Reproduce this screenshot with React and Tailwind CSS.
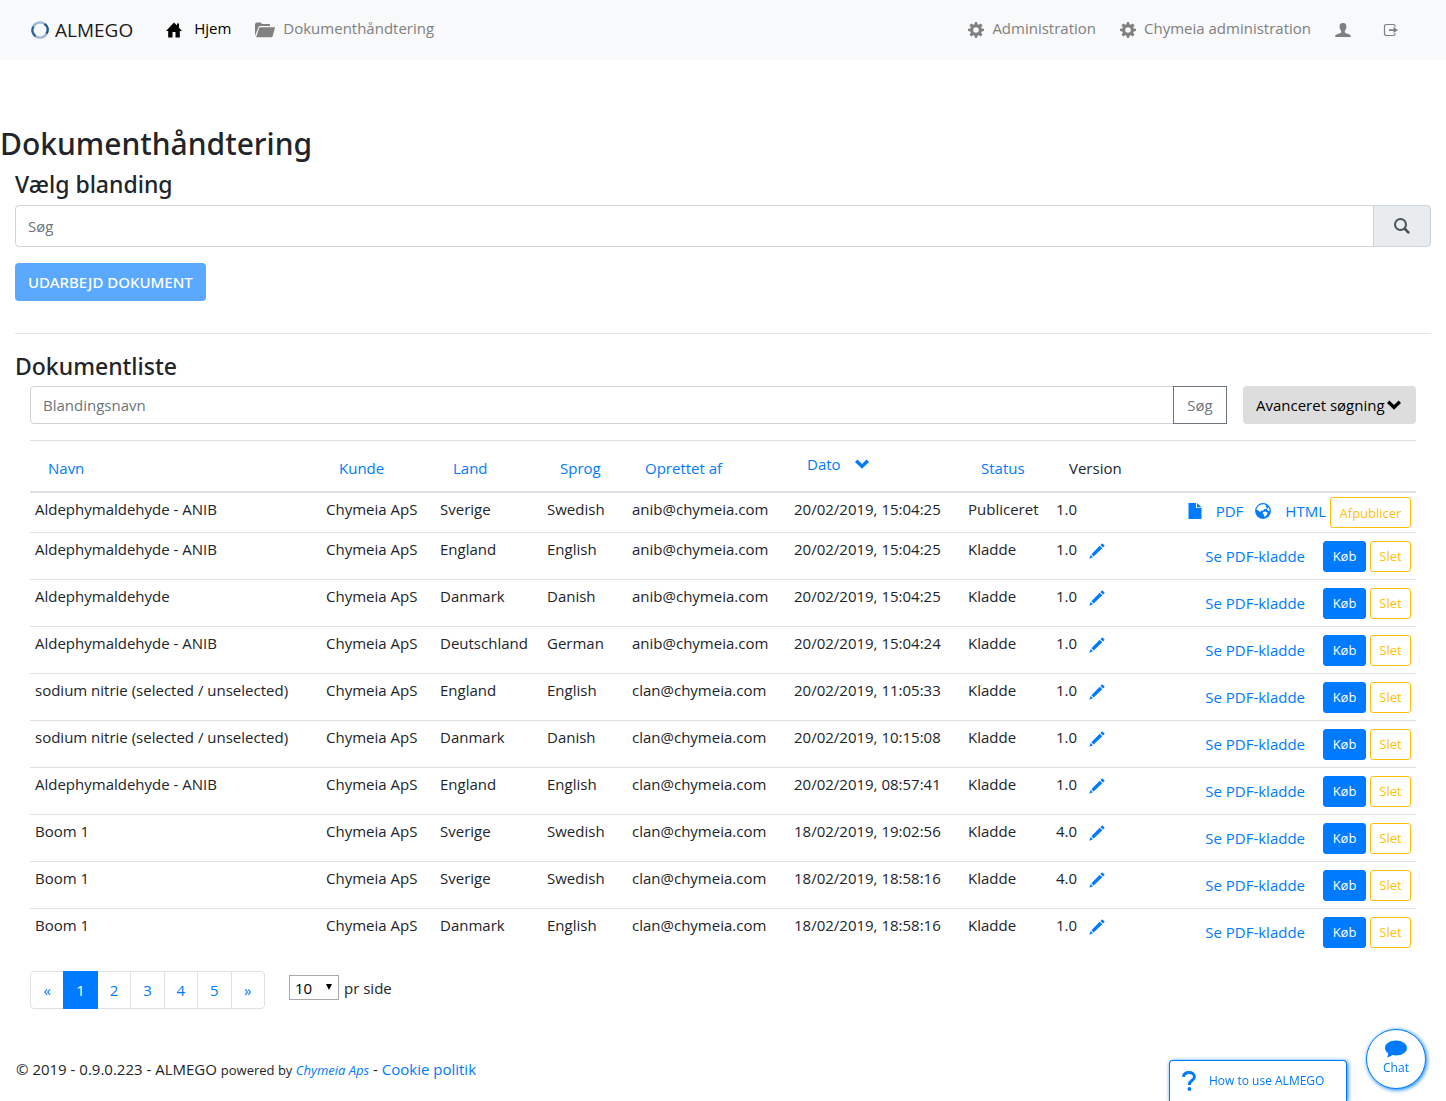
import { useState } from "react";

const HomeIcon = () => (
  <svg viewBox="0 0 16 16" className="w-4 h-4" fill="currentColor" aria-hidden="true">
    <path d="M8 .4 0 8.900h2.200V15.500h4.300V10h3v5.500h4.300V8.900H16L13 5.700V1.500h-2v2.100z" />
  </svg>
);

const FolderIcon = () => (
  <svg viewBox="0 0 20 16" className="w-5 h-4" fill="currentColor" aria-hidden="true">
    <path d="M0 14V2.200Q0 1.900.4 1.600L1.200.700Q1.400.500 1.800.500H5.500Q5.900.500 6.100.800L7 2H14.500Q15 2 15 2.500V4H4.700Q3.900 4 3.600 4.800z" />
    <path d="M5 5.200H19.400Q20.100 5.200 19.900 5.900L17.500 14.600Q17.300 15.300 16.700 15.300H1.800Q1.100 15.300 1.400 14.600L4.200 5.800Q4.400 5.200 5 5.200z" />
  </svg>
);

const CogIcon = () => (
  <svg viewBox="0 0 16 16" className="w-4 h-4" fill="currentColor" aria-hidden="true">
    <path
      fillRule="evenodd"
      d="M6.900 0h2.200l.4 2.200 1.300.5L12.700 1.500l1.800 1.800-1.300 1.900.5 1.300 2.300.4v2.200l-2.300.4-.5 1.300 1.300 1.900-1.800 1.800-1.900-1.300-1.300.5L9.100 16H6.900l-.4-2.300-1.300-.5-1.900 1.300-1.800-1.800 1.300-1.900-.5-1.300L0 9.100V6.900l2.300-.4.5-1.300L1.500 3.300l1.800-1.800 1.900 1.200 1.300-.5zM8 5.200a2.800 2.800 0 1 0 0 5.600 2.800 2.800 0 0 0 0-5.600z"
    />
  </svg>
);

const UserIcon = () => (
  <svg viewBox="0 0 16 16" className="w-4 h-4" fill="currentColor" aria-hidden="true">
    <path d="M8 1C5.400 1 4.400 2.600 4.600 5c.1 1.600.9 2.900 1.600 3.800v1.300c0 .4-.2.700-.6.900L1.500 12.500C.5 12.900.2 13.700.2 14.500V15h15.600v-.5c0-.8-.3-1.600-1.300-2L10.400 11c-.4-.2-.6-.5-.6-.9V8.800c.7-.9 1.500-2.200 1.600-3.800C11.600 2.600 10.600 1 8 1z" />
  </svg>
);

const LogoutIcon = () => (
  <svg viewBox="0 0 16 16" className="w-4 h-4" fill="currentColor" aria-hidden="true">
    <path d="M12 5V4Q12 2.500 10.500 2.500H3.500Q1.500 2.500 1.500 4.500V11.500Q1.500 13.500 3.500 13.500H10.500Q12 13.500 12 12V11" fill="none" stroke="currentColor" strokeWidth="1.200" />
    <path d="M6 7.200h4.500V5l4.500 3-4.500 3V8.900H6z" />
  </svg>
);

const SearchIcon = () => (
  <svg viewBox="0 0 16 16" className="w-4 h-4" fill="none" stroke="currentColor" aria-hidden="true">
    <circle cx="6.500" cy="6.500" r="5.500" strokeWidth="2" />
    <path d="m10.500 10.500 4.600 4.600" strokeWidth="2.600" />
  </svg>
);

const ChevronIcon = () => (
  <svg viewBox="0 0 14 10" className="w-[14px] h-[10px]" fill="currentColor" aria-hidden="true">
    <path d="M2.400.6 7 5 11.600.6 14 3 7 9.800 0 3z" />
  </svg>
);

const PencilIcon = () => (
  <svg viewBox="0 0 16 16" className="w-4 h-4" fill="currentColor" aria-hidden="true">
    <path d="M12.700.7q.5-.5 1 0l1.600 1.600q.5.500 0 1L14 4.600 11.400 2zM10.700 2.700l2.600 2.600-8.600 8.200-2.300-2.300zM1.700 11.900l2.300 2.300L.2 15.800z" />
  </svg>
);

const FileIcon = () => (
  <svg viewBox="0 0 14 16" className="w-[14px] h-4" fill="currentColor" aria-hidden="true">
    <path d="M.5 0H8v5h5.500v11H.5z" />
    <path d="M9 0l4.500 4.200H9z" />
  </svg>
);

const GlobeIcon = () => (
  <svg viewBox="0 0 16 16" className="w-4 h-4" aria-hidden="true">
    <circle cx="8" cy="8" r="7.900" fill="currentColor" />
    <path d="M5.500 1.700 9 1.200l2.200 1.100-.7 1.500 1.500 1-1 1.500-1.800-.2-1 1.400-2.200.2-.6 1.200-1.600-1L2.300 7l-.9-.6C2 4.200 3.500 2.500 5.500 1.700zM8 9l2.400-.5 2.300 1.300-.9 2.100-1.800 1.800-.9-.2-.4-2.300-1.200-1zM12.700 4.800l.9-.3c.6 1 1 2.200 1 3.400l-1.300.2-1.200-1.600z" fill="#fff" />
  </svg>
);

const LogoIcon = () => (
  <svg viewBox="0 0 18 18" className="w-[18px] h-[18px]" fill="none" aria-hidden="true">
    <circle cx="9" cy="9" r="7.600" stroke="#9db4d6" strokeWidth="2.400" />
    <path d="M2.600 5.500C.4 9 1.300 13 4.600 15.300" stroke="#2a6797" strokeWidth="2.200" />
    <path d="M13.600 2.800C17 5 17.600 9 15.500 12.600" stroke="#1a5a8e" strokeWidth="2.200" />
  </svg>
);

const ChatIcon = () => (
  <svg viewBox="0 0 22 18" className="w-[22px] h-[18px]" fill="currentColor" aria-hidden="true">
    <path d="M11 .5C4.900.500 0 3.800 0 8c0 2.200 1.300 4.100 3.300 5.500-.1 1.500-.6 2.800-1.300 3.900 2.200-.3 4-1.200 5.300-2.300 1.200.3 2.400.4 3.700.4 6.100 0 11-3.300 11-7.500S17.100.500 11 .5z" />
  </svg>
);

const QuestionIcon = () => (
  <svg viewBox="0 0 14 20" className="w-[14px] h-5" fill="none" stroke="currentColor" aria-hidden="true">
    <path d="M1.500 5.800C1.800 3 4 1.600 7 1.600s5.400 1.600 5.400 4.300c0 3.600-5 3.700-5 7.300v.8" strokeWidth="3" />
    <circle cx="7.400" cy="18" r="1.900" fill="currentColor" stroke="none" />
  </svg>
);

const documents = [
  { name: "Aldephymaldehyde - ANIB", country: "Sverige", language: "Swedish", user: "anib@chymeia.com", date: "20/02/2019, 15:04:25", status: "Publiceret", version: "1.0" },
  { name: "Aldephymaldehyde - ANIB", country: "England", language: "English", user: "anib@chymeia.com", date: "20/02/2019, 15:04:25", status: "Kladde", version: "1.0" },
  { name: "Aldephymaldehyde", country: "Danmark", language: "Danish", user: "anib@chymeia.com", date: "20/02/2019, 15:04:25", status: "Kladde", version: "1.0" },
  { name: "Aldephymaldehyde - ANIB", country: "Deutschland", language: "German", user: "anib@chymeia.com", date: "20/02/2019, 15:04:24", status: "Kladde", version: "1.0" },
  { name: "sodium nitrie (selected / unselected)", country: "England", language: "English", user: "clan@chymeia.com", date: "20/02/2019, 11:05:33", status: "Kladde", version: "1.0" },
  { name: "sodium nitrie (selected / unselected)", country: "Danmark", language: "Danish", user: "clan@chymeia.com", date: "20/02/2019, 10:15:08", status: "Kladde", version: "1.0" },
  { name: "Aldephymaldehyde - ANIB", country: "England", language: "English", user: "clan@chymeia.com", date: "20/02/2019, 08:57:41", status: "Kladde", version: "1.0" },
  { name: "Boom 1", country: "Sverige", language: "Swedish", user: "clan@chymeia.com", date: "18/02/2019, 19:02:56", status: "Kladde", version: "4.0" },
  { name: "Boom 1", country: "Sverige", language: "Swedish", user: "clan@chymeia.com", date: "18/02/2019, 18:58:16", status: "Kladde", version: "4.0" },
  { name: "Boom 1", country: "Danmark", language: "English", user: "clan@chymeia.com", date: "18/02/2019, 18:58:16", status: "Kladde", version: "1.0" },
];

const columns = [
  { label: "Navn", width: "" },
  { label: "Kunde", width: "w-[114px]" },
  { label: "Land", width: "w-[107px]" },
  { label: "Sprog", width: "w-[85px]" },
  { label: "Oprettet af", width: "w-[162px]" },
  { label: "Dato", width: "w-[174px]", sorted: true },
  { label: "Status", width: "w-[88px]" },
];

const Navbar = () => (
  <nav className="flex items-center justify-between h-[60px] bg-[#f8f9fa] pl-[31px] pr-10 text-[#808080]">
    <div className="flex items-center">
      <a href="#" className="flex items-center gap-1.5 text-[19px] text-[#1a1a1a] mr-[33px]">
        <LogoIcon />
        ALMEGO
      </a>
      <a href="#" className="flex items-center gap-3 text-black mr-6">
        <HomeIcon />
        <span className="pb-1">Hjem</span>
      </a>
      <a href="#" className="flex items-center gap-2">
        <FolderIcon />
        <span className="pb-1">Dokumenthåndtering</span>
      </a>
    </div>
    <div className="flex items-center gap-6">
      <a href="#" className="flex items-center gap-2">
        <CogIcon />
        <span className="pb-1">Administration</span>
      </a>
      <a href="#" className="flex items-center gap-2">
        <CogIcon />
        <span className="pb-1">Chymeia administration</span>
      </a>
      <a href="#" aria-label="Profil" className="mr-2">
        <UserIcon />
      </a>
      <a href="#" aria-label="Log ud" className="pr-[7px]">
        <LogoutIcon />
      </a>
    </div>
  </nav>
);

const DocumentRow = ({ doc, first }) => {
  const published = doc.status === "Publiceret";
  const line = first ? "" : "border-t border-[#dee2e6]";
  const cell = `${line} px-[5px] pt-1 align-top`;

  return (
    <tr className={first ? "h-[39px]" : "h-[47px]"}>
      <td className={cell}>{doc.name}</td>
      <td className={cell}>Chymeia ApS</td>
      <td className={cell}>{doc.country}</td>
      <td className={cell}>{doc.language}</td>
      <td className={cell}>{doc.user}</td>
      <td className={cell}>{doc.date}</td>
      <td className={cell}>{doc.status}</td>
      <td className={cell}>
        <div className="flex items-center gap-3">
          {doc.version}
          {!published && (
            <button type="button" aria-label="Rediger" className="pt-1 text-[#007bff]">
              <PencilIcon />
            </button>
          )}
        </div>
      </td>
      <td className={`${line} px-[5px] align-middle`}>
        {published ? (
          <div className="flex items-center justify-end gap-1 text-[#007bff]">
            <a href="#" className="flex items-center gap-3.5 mr-2 pb-1">
              <FileIcon />
              PDF
            </a>
            <a href="#" className="flex items-center gap-3.5 pb-1">
              <GlobeIcon />
              HTML
            </a>
            <button type="button" className="h-[31px] w-[81px] border border-[#ffc107] rounded-[3px] text-[13px] text-[#ffc107]">
              Afpublicer
            </button>
          </div>
        ) : (
          <div className="flex items-center justify-end gap-1">
            <a href="#" className="text-[#007bff] mr-3.5">
              Se PDF-kladde
            </a>
            <button type="button" className="h-[31px] w-[43px] border border-[#007bff] bg-[#007bff] rounded-[3px] text-[13px] text-white">
              Køb
            </button>
            <button type="button" className="h-[31px] w-[41px] border border-[#ffc107] rounded-[3px] text-[13px] text-[#ffc107]">
              Slet
            </button>
          </div>
        )}
      </td>
    </tr>
  );
};

const DocumentTable = () => (
  <table className="w-full mt-4 table-fixed border-separate border-spacing-0 text-left whitespace-nowrap">
    <thead>
      <tr className="h-[53px]">
        {columns.map((col) => (
          <th
            key={col.label}
            className={`${col.width} ${col.sorted ? "align-top" : "align-bottom"} border-t border-b-2 border-[#dee2e6] px-[5px] py-1 font-normal`}
          >
            <button type="button" className="flex items-center gap-3.5 h-[38px] px-[13px] text-[#007bff]">
              {col.label}
              {col.sorted && <ChevronIcon />}
            </button>
          </th>
        ))}
        <th className="w-[110px] align-bottom border-t border-b-2 border-[#dee2e6] px-[5px] py-1 font-normal">
          <span className="flex items-center h-[38px] px-[13px]">Version</span>
        </th>
        <th className="w-[255px] border-t border-b-2 border-[#dee2e6]" aria-label="Handlinger"></th>
      </tr>
    </thead>
    <tbody>
      {documents.map((doc, i) => (
        <DocumentRow key={i} doc={doc} first={i === 0} />
      ))}
    </tbody>
  </table>
);

const Pagination = ({ page, setPage }) => {
  const item = "flex-1 border border-[#dee2e6] text-[#007bff]";

  return (
    <div className="flex w-[235px] h-[38px] -space-x-px">
      <button type="button" className={`${item} rounded-l`} onClick={() => setPage(Math.max(1, page - 1))}>
        «
      </button>
      {[1, 2, 3, 4, 5].map((n) => (
        <button
          key={n}
          type="button"
          onClick={() => setPage(n)}
          className={n === page ? "flex-1 z-10 border border-[#007bff] bg-[#007bff] text-white" : item}
        >
          {n}
        </button>
      ))}
      <button type="button" className={`${item} rounded-r`} onClick={() => setPage(Math.min(5, page + 1))}>
        »
      </button>
    </div>
  );
};

const App = () => {
  const [mixture, setMixture] = useState("");
  const [search, setSearch] = useState("");
  const [page, setPage] = useState(1);
  const [pageSize, setPageSize] = useState("10");

  return (
    <div className="bg-white text-[15px] leading-6 text-[#212529] font-['Open_Sans',sans-serif]">
      <Navbar />

      <main className="pt-16">
        <h1 className="font-['Noto_Sans',sans-serif] text-[30px] leading-10 font-medium">Dokumenthåndtering</h1>

        <section className="px-[15px] pt-1">
          <h2 className="font-['Noto_Sans',sans-serif] text-[23px] leading-8 font-medium">Vælg blanding</h2>
          <div className="flex h-[42px] mt-[5px]">
            <input
              type="text"
              aria-label="Søg"
              placeholder="Søg"
              value={mixture}
              onChange={(e) => setMixture(e.target.value)}
              className="flex-1 min-w-0 px-3 border border-[#ced4da] rounded-l placeholder:text-[#6c757d]"
            />
            <button
              type="button"
              aria-label="Søg blanding"
              className="flex items-center justify-center w-[58px] -ml-px border border-[#ced4da] rounded-r bg-[#e9ecef] text-[#495057]"
            >
              <SearchIcon />
            </button>
          </div>
          <button type="button" className="h-[38px] mt-4 px-[13px] rounded bg-[#5aa9ff] text-white font-['Noto_Sans',sans-serif] font-medium">
            UDARBEJD DOKUMENT
          </button>
          <hr className="mt-8 border-[#e5e5e5]" />
        </section>

        <section className="px-[15px] pt-4">
          <h2 className="font-['Noto_Sans',sans-serif] text-[23px] leading-8 font-medium">Dokumentliste</h2>
          <div className="px-[15px] pt-1">
            <div className="flex h-[38px] gap-4">
              <div className="flex flex-1">
                <input
                  type="text"
                  aria-label="Blandingsnavn"
                  placeholder="Blandingsnavn"
                  value={search}
                  onChange={(e) => setSearch(e.target.value)}
                  className="flex-1 min-w-0 px-3 border border-[#ced4da] rounded-l placeholder:text-[#6c757d]"
                />
                <button type="button" className="w-[54px] -ml-px border border-[#6c757d] text-[#6c757d]">
                  Søg
                </button>
              </div>
              <button type="button" className="flex items-center gap-0.5 w-[173px] px-[13px] rounded bg-[#dddddd] text-black">
                Avanceret søgning
                <ChevronIcon />
              </button>
            </div>

            <DocumentTable />

            <div className="flex items-start gap-6 mt-4">
              <Pagination page={page} setPage={setPage} />
              <div className="flex items-center gap-[5px] pt-1">
                <div className="relative">
                  <select
                    id="page-size"
                    value={pageSize}
                    onChange={(e) => setPageSize(e.target.value)}
                    className="block appearance-none w-[50px] h-[25px] pl-[5px] border border-[#a9a9a9] bg-white text-black"
                  >
                    <option>10</option>
                    <option>25</option>
                    <option>50</option>
                  </select>
                  <svg viewBox="0 0 6 6" className="absolute right-[7px] top-[9px] w-[6px] h-[6px] pointer-events-none" aria-hidden="true">
                    <path d="M0 0h6L3 6z" />
                  </svg>
                </div>
                <label htmlFor="page-size">pr side</label>
              </div>
            </div>
          </div>
        </section>
      </main>

      <footer className="px-4 mt-12">
        © 2019 - 0.9.0.223 - ALMEGO <span className="text-[13px]">powered by </span>
        <a href="#" className="text-[13px] italic text-[#007bff]">
          Chymeia Aps
        </a>{" "}
        -{" "}
        <a href="#" className="text-[#007bff]">
          Cookie politik
        </a>
      </footer>

      <button
        type="button"
        className="fixed bottom-0 right-[99px] flex items-center gap-[13px] w-[178px] h-[41px] pl-3 bg-white border border-b-0 border-[#007bff] rounded-t text-xs text-[#007bff] shadow-[1px_1px_4px_#007bff]"
      >
        <QuestionIcon />
        How to use ALMEGO
      </button>
      <button
        type="button"
        className="fixed bottom-3 right-5 flex flex-col items-center justify-center w-[60px] h-[60px] bg-white border border-[#007bff] rounded-full text-xs leading-5 text-[#007bff] shadow-[1px_1px_4px_#007bff]"
      >
        <ChatIcon />
        Chat
      </button>
    </div>
  );
};

export default App;
